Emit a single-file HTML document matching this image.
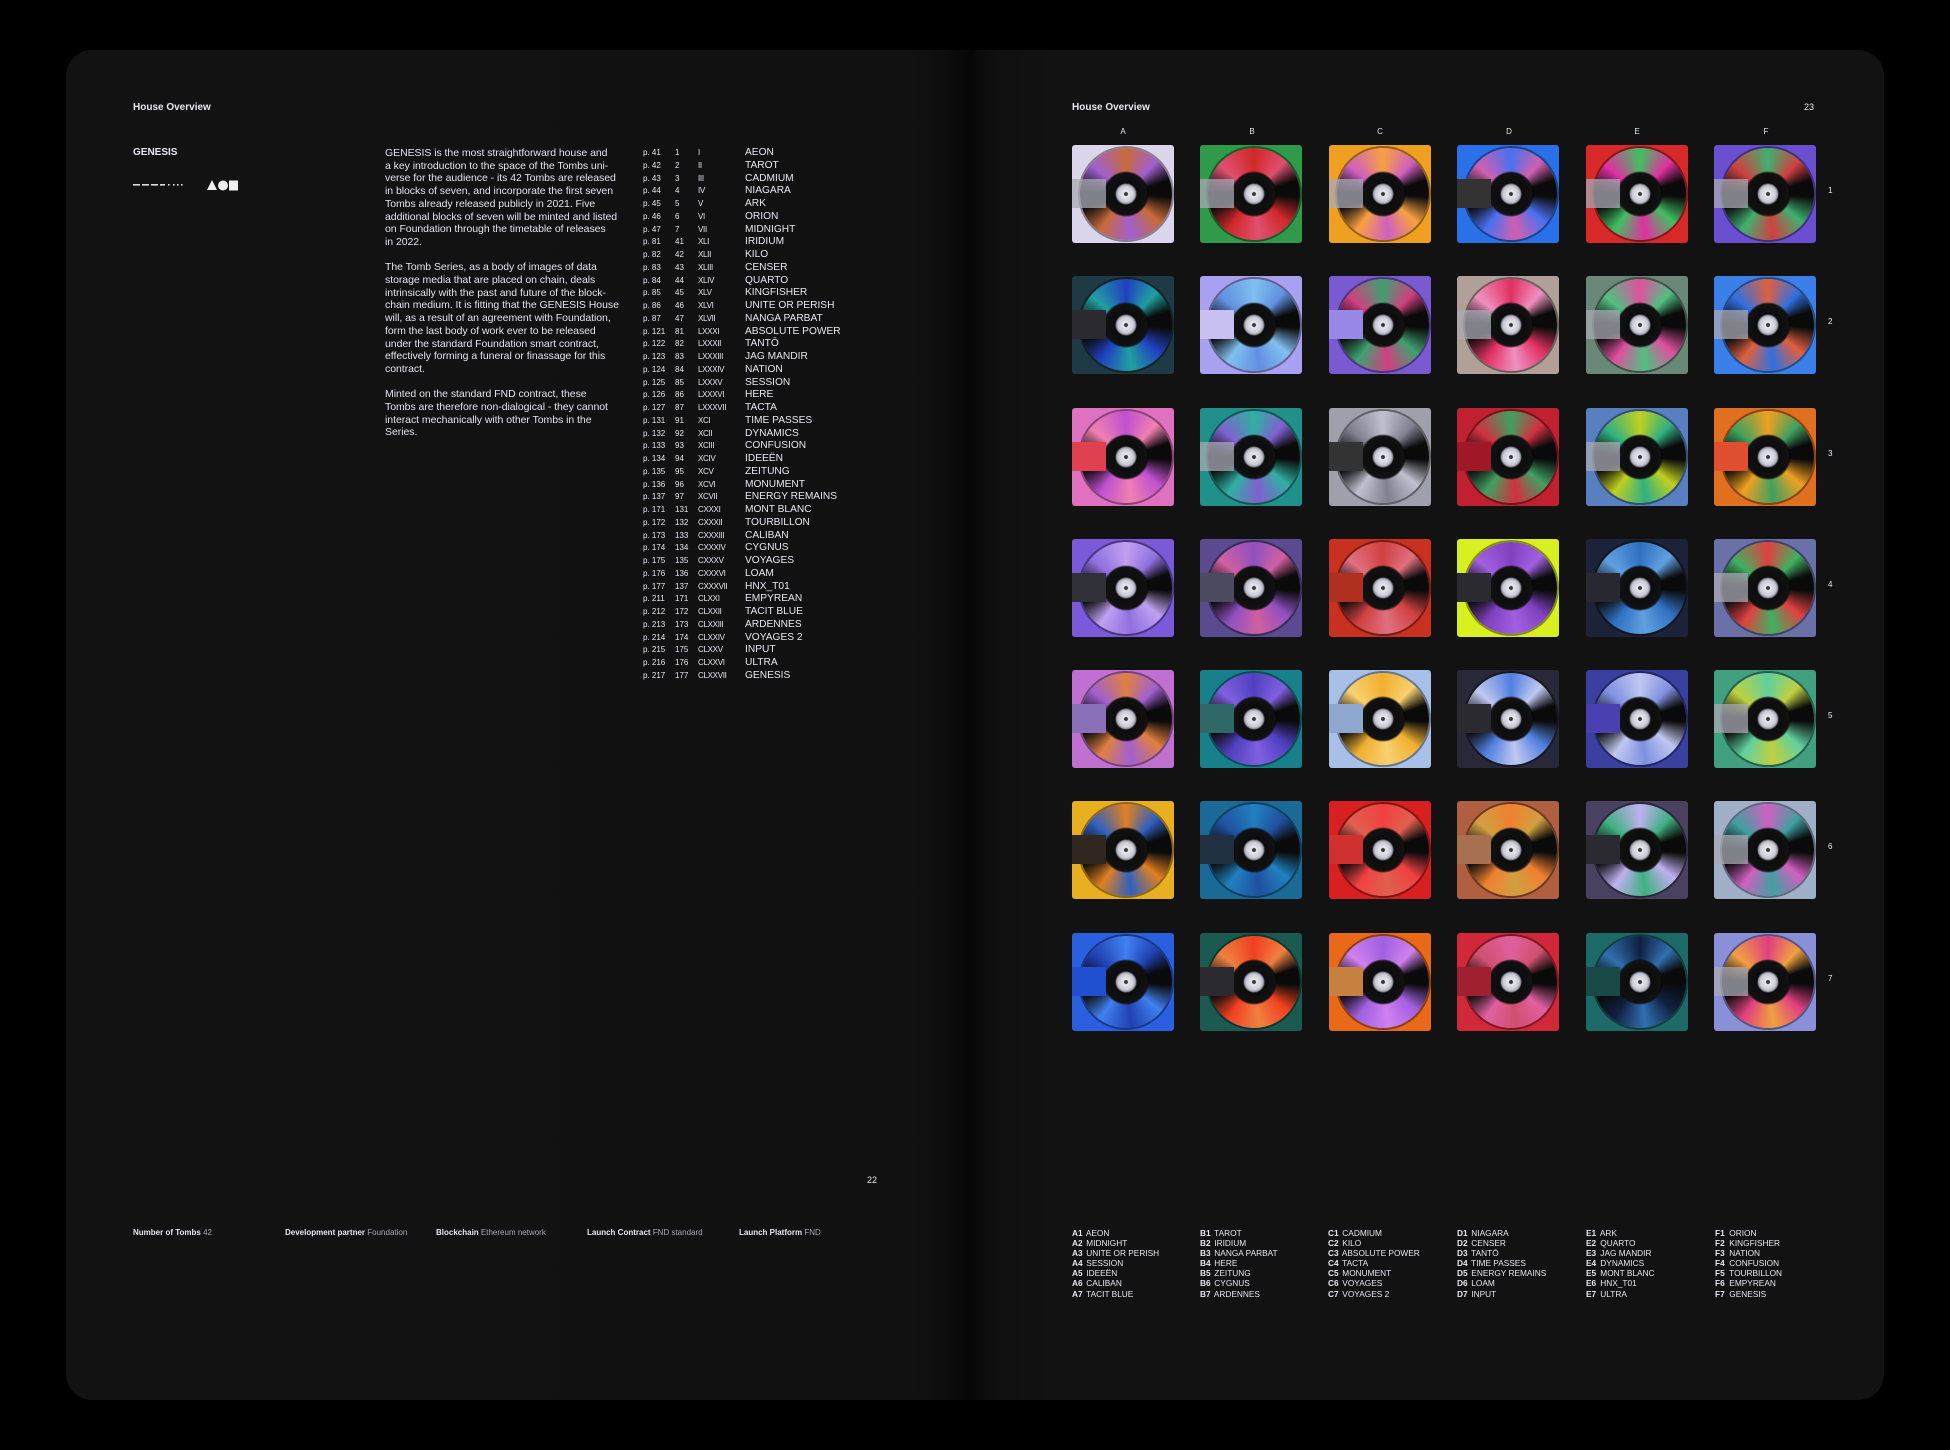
<!DOCTYPE html>
<html><head><meta charset="utf-8"><style>
*{margin:0;padding:0;box-sizing:border-box}
html,body{width:1950px;height:1450px;background:#000;overflow:hidden;font-family:"Liberation Sans",sans-serif;color:#e8e6f0}
.book{position:absolute;left:66px;top:50px;width:1818px;height:1350px;border-radius:26px;overflow:hidden;background:linear-gradient(90deg,#121212 0,#111 850px,#0d0d0d 880px,#060606 905px,#0b0b0b 912px,#101010 935px,#121212 1000px,#121212 100%)}
.a{position:absolute;white-space:nowrap}
.h{font-size:10px;font-weight:bold}
.body{position:absolute;left:385px;top:147px;font-size:10.5px;line-height:12.7px;color:#e4e2ee;white-space:nowrap;letter-spacing:-0.05px}
.body p{margin-bottom:12.7px}
.tb{position:absolute;left:643px;top:147px;font-size:10.2px;line-height:12.75px}
.r{position:relative;height:12.75px}
.r span{position:absolute;top:0;white-space:nowrap}
.r .p{left:0;font-size:8px}.r .n{left:32px;font-size:8px}.r .m{left:55px;font-size:8px;letter-spacing:-0.3px}.r .t{left:102px}
.ft{position:absolute;top:1228px;font-size:8px;white-space:nowrap}
.ft b{font-weight:bold}.ft span{color:#aaa8b4}
.d{position:absolute;width:102px;height:98px;border-radius:3px;background:var(--c);overflow:hidden}
.d::before{content:"";position:absolute;left:8px;top:3px;width:92px;height:92px;border-radius:50%;
background:radial-gradient(circle,#333 0 1.5px,#e8e8f0 2.5px,#c8c8d4 8px,#9a9aa8 9.5px,#0c0c0c 11px,#111 21px,rgba(0,0,0,.5) 22px,transparent 23px),
conic-gradient(var(--a),var(--b) 12%,#0a0a0a 20%,#0a0a0a 26%,var(--a) 36%,var(--b) 48%,var(--a) 60%,#0a0a0a 70%,#0a0a0a 76%,var(--b) 86%,var(--a));box-shadow:0 0 0 2px rgba(0,0,0,.4)}
.d::after{content:"";position:absolute;left:0;top:35%;width:34px;height:29%;background:var(--s,rgba(170,170,180,.75))}
.cl{position:absolute;top:127px;font-size:8px;width:20px;text-align:center;margin-left:-10px}
.rn{position:absolute;left:1828px;font-size:8px}
.lg{position:absolute;top:1228px;font-size:8.3px;line-height:10.1px;white-space:nowrap}
.lg b{display:inline-block;width:12px}
</style></head><body>
<div class="book"></div>
<div class="a h" style="left:133px;top:102px">House Overview</div>
<div class="a h" style="left:133px;top:147px">GENESIS</div>
<svg class="a" style="left:133px;top:182px" width="52" height="6"><g fill="#ddd"><rect x="0" y="2" width="7" height="1.6"/><rect x="9" y="2" width="7" height="1.6"/><rect x="18" y="2" width="7" height="1.6"/><rect x="27" y="2" width="5" height="1.6"/><rect x="35" y="2" width="1.6" height="1.6"/><rect x="40" y="2" width="1.6" height="1.6"/><rect x="44" y="2" width="1.6" height="1.6"/><rect x="48" y="2" width="1.6" height="1.6"/></g></svg>
<svg class="a" style="left:207px;top:180px" width="32" height="11"><polygon points="0,10 5,0 10,10" fill="#eee"/><circle cx="16" cy="5.5" r="5" fill="#eee"/><rect x="22" y="0.5" width="9" height="10" fill="#eee"/></svg>
<div class="body">
<p>GENESIS is the most straightforward house and<br>a key introduction to the space of the Tombs uni-<br>verse for the audience - its 42 Tombs are released<br>in blocks of seven, and incorporate the first seven<br>Tombs already released publicly in 2021. Five<br>additional blocks of seven will be minted and listed<br>on Foundation through the timetable of releases<br>in 2022.</p>
<p>The Tomb Series, as a body of images of data<br>storage media that are placed on chain, deals<br>intrinsically with the past and future of the block-<br>chain medium. It is fitting that the GENESIS House<br>will, as a result of an agreement with Foundation,<br>form the last body of work ever to be released<br>under the standard Foundation smart contract,<br>effectively forming a funeral or finassage for this<br>contract.</p>
<p>Minted on the standard FND contract, these<br>Tombs are therefore non-dialogical - they cannot<br>interact mechanically with other Tombs in the<br>Series.</p>
</div>
<div class="tb">
<div class="r"><span class="p">p. 41</span><span class="n">1</span><span class="m">I</span><span class="t">AEON</span></div>
<div class="r"><span class="p">p. 42</span><span class="n">2</span><span class="m">II</span><span class="t">TAROT</span></div>
<div class="r"><span class="p">p. 43</span><span class="n">3</span><span class="m">III</span><span class="t">CADMIUM</span></div>
<div class="r"><span class="p">p. 44</span><span class="n">4</span><span class="m">IV</span><span class="t">NIAGARA</span></div>
<div class="r"><span class="p">p. 45</span><span class="n">5</span><span class="m">V</span><span class="t">ARK</span></div>
<div class="r"><span class="p">p. 46</span><span class="n">6</span><span class="m">VI</span><span class="t">ORION</span></div>
<div class="r"><span class="p">p. 47</span><span class="n">7</span><span class="m">VII</span><span class="t">MIDNIGHT</span></div>
<div class="r"><span class="p">p. 81</span><span class="n">41</span><span class="m">XLI</span><span class="t">IRIDIUM</span></div>
<div class="r"><span class="p">p. 82</span><span class="n">42</span><span class="m">XLII</span><span class="t">KILO</span></div>
<div class="r"><span class="p">p. 83</span><span class="n">43</span><span class="m">XLIII</span><span class="t">CENSER</span></div>
<div class="r"><span class="p">p. 84</span><span class="n">44</span><span class="m">XLIV</span><span class="t">QUARTO</span></div>
<div class="r"><span class="p">p. 85</span><span class="n">45</span><span class="m">XLV</span><span class="t">KINGFISHER</span></div>
<div class="r"><span class="p">p. 86</span><span class="n">46</span><span class="m">XLVI</span><span class="t">UNITE OR PERISH</span></div>
<div class="r"><span class="p">p. 87</span><span class="n">47</span><span class="m">XLVII</span><span class="t">NANGA PARBAT</span></div>
<div class="r"><span class="p">p. 121</span><span class="n">81</span><span class="m">LXXXI</span><span class="t">ABSOLUTE POWER</span></div>
<div class="r"><span class="p">p. 122</span><span class="n">82</span><span class="m">LXXXII</span><span class="t">TANTŌ</span></div>
<div class="r"><span class="p">p. 123</span><span class="n">83</span><span class="m">LXXXIII</span><span class="t">JAG MANDIR</span></div>
<div class="r"><span class="p">p. 124</span><span class="n">84</span><span class="m">LXXXIV</span><span class="t">NATION</span></div>
<div class="r"><span class="p">p. 125</span><span class="n">85</span><span class="m">LXXXV</span><span class="t">SESSION</span></div>
<div class="r"><span class="p">p. 126</span><span class="n">86</span><span class="m">LXXXVI</span><span class="t">HERE</span></div>
<div class="r"><span class="p">p. 127</span><span class="n">87</span><span class="m">LXXXVII</span><span class="t">TACTA</span></div>
<div class="r"><span class="p">p. 131</span><span class="n">91</span><span class="m">XCI</span><span class="t">TIME PASSES</span></div>
<div class="r"><span class="p">p. 132</span><span class="n">92</span><span class="m">XCII</span><span class="t">DYNAMICS</span></div>
<div class="r"><span class="p">p. 133</span><span class="n">93</span><span class="m">XCIII</span><span class="t">CONFUSION</span></div>
<div class="r"><span class="p">p. 134</span><span class="n">94</span><span class="m">XCIV</span><span class="t">IDEEËN</span></div>
<div class="r"><span class="p">p. 135</span><span class="n">95</span><span class="m">XCV</span><span class="t">ZEITUNG</span></div>
<div class="r"><span class="p">p. 136</span><span class="n">96</span><span class="m">XCVI</span><span class="t">MONUMENT</span></div>
<div class="r"><span class="p">p. 137</span><span class="n">97</span><span class="m">XCVII</span><span class="t">ENERGY REMAINS</span></div>
<div class="r"><span class="p">p. 171</span><span class="n">131</span><span class="m">CXXXI</span><span class="t">MONT BLANC</span></div>
<div class="r"><span class="p">p. 172</span><span class="n">132</span><span class="m">CXXXII</span><span class="t">TOURBILLON</span></div>
<div class="r"><span class="p">p. 173</span><span class="n">133</span><span class="m">CXXXIII</span><span class="t">CALIBAN</span></div>
<div class="r"><span class="p">p. 174</span><span class="n">134</span><span class="m">CXXXIV</span><span class="t">CYGNUS</span></div>
<div class="r"><span class="p">p. 175</span><span class="n">135</span><span class="m">CXXXV</span><span class="t">VOYAGES</span></div>
<div class="r"><span class="p">p. 176</span><span class="n">136</span><span class="m">CXXXVI</span><span class="t">LOAM</span></div>
<div class="r"><span class="p">p. 177</span><span class="n">137</span><span class="m">CXXXVII</span><span class="t">HNX_T01</span></div>
<div class="r"><span class="p">p. 211</span><span class="n">171</span><span class="m">CLXXI</span><span class="t">EMPYREAN</span></div>
<div class="r"><span class="p">p. 212</span><span class="n">172</span><span class="m">CLXXII</span><span class="t">TACIT BLUE</span></div>
<div class="r"><span class="p">p. 213</span><span class="n">173</span><span class="m">CLXXIII</span><span class="t">ARDENNES</span></div>
<div class="r"><span class="p">p. 214</span><span class="n">174</span><span class="m">CLXXIV</span><span class="t">VOYAGES 2</span></div>
<div class="r"><span class="p">p. 215</span><span class="n">175</span><span class="m">CLXXV</span><span class="t">INPUT</span></div>
<div class="r"><span class="p">p. 216</span><span class="n">176</span><span class="m">CLXXVI</span><span class="t">ULTRA</span></div>
<div class="r"><span class="p">p. 217</span><span class="n">177</span><span class="m">CLXXVII</span><span class="t">GENESIS</span></div>
</div>
<div class="a" style="left:867px;top:1175px;font-size:9px">22</div>
<div class="ft" style="left:133px"><b>Number of Tombs</b> <span>42</span></div>
<div class="ft" style="left:285px"><b>Development partner</b> <span>Foundation</span></div>
<div class="ft" style="left:436px"><b>Blockchain</b> <span>Ethereum network</span></div>
<div class="ft" style="left:587px"><b>Launch Contract</b> <span>FND standard</span></div>
<div class="ft" style="left:739px"><b>Launch Platform</b> <span>FND</span></div>

<div class="a h" style="left:1072px;top:102px">House Overview</div>
<div class="a" style="left:1804px;top:102px;font-size:9px">23</div>
<div class="cl" style="left:1123px">A</div><div class="cl" style="left:1252px">B</div><div class="cl" style="left:1380px">C</div><div class="cl" style="left:1509px">D</div><div class="cl" style="left:1637px">E</div><div class="cl" style="left:1766px">F</div>
<div class="rn" style="top:186px">1</div><div class="rn" style="top:317px">2</div><div class="rn" style="top:449px">3</div><div class="rn" style="top:580px">4</div><div class="rn" style="top:711px">5</div><div class="rn" style="top:842px">6</div><div class="rn" style="top:974px">7</div>

<div class="d" style="left:1072px;top:145px;--c:#dcd6ec;--a:#c86a3a;--b:#a060d0"></div>
<div class="d" style="left:1200px;top:145px;--c:#2e9a4a;--a:#d02828;--b:#e05070"></div>
<div class="d" style="left:1329px;top:145px;--c:#f0a020;--a:#f8a040;--b:#d060c0"></div>
<div class="d" style="left:1457px;top:145px;--c:#2a70e8;--a:#4a70f0;--b:#d060b0;--s:#333"></div>
<div class="d" style="left:1586px;top:145px;--c:#d82828;--a:#40c060;--b:#e030a0"></div>
<div class="d" style="left:1714px;top:145px;--c:#6a50d0;--a:#40b070;--b:#d04040"></div>

<div class="d" style="left:1072px;top:276px;--c:#1e3a44;--a:#2040c0;--b:#20a0a0;--s:#2a2a30"></div>
<div class="d" style="left:1200px;top:276px;--c:#a8a0f0;--a:#80c0f0;--b:#6090e0;--s:#c8c0f0"></div>
<div class="d" style="left:1329px;top:276px;--c:#7a5ad0;--a:#40a070;--b:#d04080;--s:#9a88e8"></div>
<div class="d" style="left:1457px;top:276px;--c:#b0a098;--a:#e03060;--b:#f090c0"></div>
<div class="d" style="left:1586px;top:276px;--c:#6a8878;--a:#e050a0;--b:#50c080"></div>
<div class="d" style="left:1714px;top:276px;--c:#3a80e8;--a:#e06040;--b:#3070e0"></div>

<div class="d" style="left:1072px;top:408px;--c:#e070c0;--a:#c050d0;--b:#f080b0;--s:#e04050"></div>
<div class="d" style="left:1200px;top:408px;--c:#20908a;--a:#30b0a0;--b:#8060d0"></div>
<div class="d" style="left:1329px;top:408px;--c:#a0a0ac;--a:#c0c0d0;--b:#808090;--s:#333"></div>
<div class="d" style="left:1457px;top:408px;--c:#c02030;--a:#40a060;--b:#d03040;--s:#a01828"></div>
<div class="d" style="left:1586px;top:408px;--c:#5880c0;--a:#c0d020;--b:#30b080"></div>
<div class="d" style="left:1714px;top:408px;--c:#e07020;--a:#f0a020;--b:#40a060;--s:#e05030"></div>

<div class="d" style="left:1072px;top:539px;--c:#7a5ad8;--a:#c0a0f0;--b:#9070e0;--s:#303038"></div>
<div class="d" style="left:1200px;top:539px;--c:#5a4a90;--a:#9050c0;--b:#d060a0;--s:#4a4a60"></div>
<div class="d" style="left:1329px;top:539px;--c:#c83020;--a:#d04040;--b:#e07080;--s:#b03020"></div>
<div class="d" style="left:1457px;top:539px;--c:#d8f020;--a:#8040c0;--b:#a060e0;--s:#2a2a30"></div>
<div class="d" style="left:1586px;top:539px;--c:#1c2238;--a:#3070c0;--b:#60a0e0;--s:#282830"></div>
<div class="d" style="left:1714px;top:539px;--c:#6a70a8;--a:#e04040;--b:#40b060"></div>

<div class="d" style="left:1072px;top:670px;--c:#c070d0;--a:#e08040;--b:#a060d0;--s:#8a70b8"></div>
<div class="d" style="left:1200px;top:670px;--c:#18808a;--a:#5040c0;--b:#8060e0;--s:#306868"></div>
<div class="d" style="left:1329px;top:670px;--c:#a8c0e8;--a:#f0b030;--b:#f8d070;--s:#90a8d0"></div>
<div class="d" style="left:1457px;top:670px;--c:#282838;--a:#5080e0;--b:#c0c8f0;--s:#2a2a30"></div>
<div class="d" style="left:1586px;top:670px;--c:#3a40a0;--a:#c0c8f0;--b:#8090e0;--s:#4a40b0"></div>
<div class="d" style="left:1714px;top:670px;--c:#40a080;--a:#60d0a0;--b:#c0d040"></div>

<div class="d" style="left:1072px;top:801px;--c:#e8b020;--a:#e08020;--b:#3060c0;--s:#302820"></div>
<div class="d" style="left:1200px;top:801px;--c:#1a6a98;--a:#2080c0;--b:#2050a0;--s:#203040"></div>
<div class="d" style="left:1329px;top:801px;--c:#d82020;--a:#f04040;--b:#e06050;--s:#d03030"></div>
<div class="d" style="left:1457px;top:801px;--c:#b06040;--a:#f08030;--b:#d0a040;--s:#a87050"></div>
<div class="d" style="left:1586px;top:801px;--c:#4a4060;--a:#c0b0f0;--b:#40b080;--s:#2a2a30"></div>
<div class="d" style="left:1714px;top:801px;--c:#a0b0c8;--a:#d060c0;--b:#40a0a0"></div>

<div class="d" style="left:1072px;top:933px;--c:#2a60e0;--a:#4080f0;--b:#2040b0;--s:#2050d0"></div>
<div class="d" style="left:1200px;top:933px;--c:#1a5a50;--a:#f04020;--b:#f08040;--s:#2a2a30"></div>
<div class="d" style="left:1329px;top:933px;--c:#e86a18;--a:#a060e0;--b:#d080f0;--s:#c88040"></div>
<div class="d" style="left:1457px;top:933px;--c:#d02838;--a:#e060a0;--b:#d05070;--s:#a02030"></div>
<div class="d" style="left:1586px;top:933px;--c:#1e6a68;--a:#102040;--b:#3070b0;--s:#1a4a48"></div>
<div class="d" style="left:1714px;top:933px;--c:#8a90d8;--a:#e04080;--b:#f0a040"></div>

<div class="lg" style="left:1072px"><b>A1</b> AEON<br><b>A2</b> MIDNIGHT<br><b>A3</b> UNITE OR PERISH<br><b>A4</b> SESSION<br><b>A5</b> IDEEËN<br><b>A6</b> CALIBAN<br><b>A7</b> TACIT BLUE</div>
<div class="lg" style="left:1200px"><b>B1</b> TAROT<br><b>B2</b> IRIDIUM<br><b>B3</b> NANGA PARBAT<br><b>B4</b> HERE<br><b>B5</b> ZEITUNG<br><b>B6</b> CYGNUS<br><b>B7</b> ARDENNES</div>
<div class="lg" style="left:1328px"><b>C1</b> CADMIUM<br><b>C2</b> KILO<br><b>C3</b> ABSOLUTE POWER<br><b>C4</b> TACTA<br><b>C5</b> MONUMENT<br><b>C6</b> VOYAGES<br><b>C7</b> VOYAGES 2</div>
<div class="lg" style="left:1457px"><b>D1</b> NIAGARA<br><b>D2</b> CENSER<br><b>D3</b> TANTŌ<br><b>D4</b> TIME PASSES<br><b>D5</b> ENERGY REMAINS<br><b>D6</b> LOAM<br><b>D7</b> INPUT</div>
<div class="lg" style="left:1586px"><b>E1</b> ARK<br><b>E2</b> QUARTO<br><b>E3</b> JAG MANDIR<br><b>E4</b> DYNAMICS<br><b>E5</b> MONT BLANC<br><b>E6</b> HNX_T01<br><b>E7</b> ULTRA</div>
<div class="lg" style="left:1715px"><b>F1</b> ORION<br><b>F2</b> KINGFISHER<br><b>F3</b> NATION<br><b>F4</b> CONFUSION<br><b>F5</b> TOURBILLON<br><b>F6</b> EMPYREAN<br><b>F7</b> GENESIS</div>
</body></html>
